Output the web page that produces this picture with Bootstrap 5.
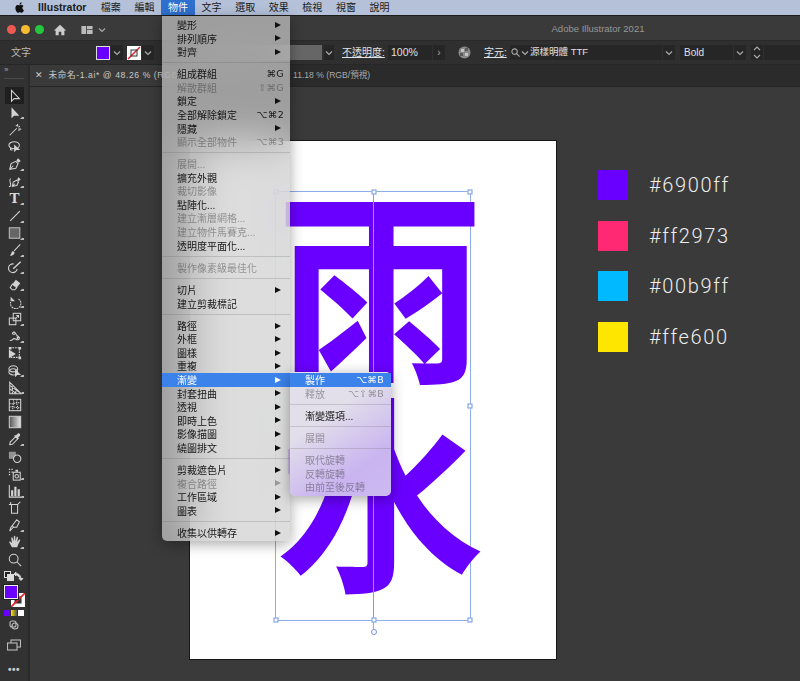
<!DOCTYPE html>
<html lang="zh-TW">
<head>
<meta charset="UTF-8">
<title>Adobe Illustrator 2021</title>
<link href="https://cdn.jsdelivr.net/npm/bootstrap@5.3.0/dist/css/bootstrap.min.css" rel="stylesheet">
<style>
    html, body { height: 100%; }
    body { background: #3a3a3a; overflow: hidden; font-family: "Liberation Sans", "Noto Sans CJK TC", sans-serif; font-size: 10px; }
    .app-root { width: 800px; height: 681px; }

    /* mac menu bar */
    .mac-bar { height: 16px; background: #b4c1d9; color: #1a1a1a; border-bottom: 1px solid #1c1c1c; }
    .apple-logo { width: 12px; height: 13px; margin-left: 14px; fill: #111; }
    .app-name { font-weight: 700; font-size: 10.5px; width: 56px; margin-left: 12px; }
    .mac-item { width: 33.6px; text-align: center; line-height: 15px; }
    .mac-item.is-open { background: #2f6fce; color: #fff; }

    /* title bar */
    .title-bar { height: 24px; background: #3a3a3a; padding: 3px 0 0 6.5px; }
    .light { width: 9px; height: 9px; border-radius: 50%; }
    .light-red { background: #ee5a52; }
    .light-yellow { background: #f5bd2f; margin-left: 5px; }
    .light-green { background: #27c63f; margin-left: 5px; }
    .home-ico { width: 14px; height: 14px; margin-left: 9px; fill: #ccc; }
    .layout-ico { width: 12px; height: 8px; margin-left: 14px; fill: #bbb; }
    .tiny-caret { width: 8px; height: 6px; fill: none; stroke: #aaa; stroke-width: 1.2; }
    .layout-caret { margin-left: 5px; }
    .title-name { position: absolute; left: 398px; top: 22px; width: 400px; text-align: center; color: #979797; font-size: 9.5px; }

    /* control bar */
    .ctl-bar { height: 25px; background: #2f2f2f; border-top: 1px solid #292929; border-bottom: 1px solid #262626; color: #cfcfcf; }
    .ctl-kind { margin-left: 11px; width: 85px; color: #b9b9b9; }
    .ctl-fill { width: 14px; height: 14px; background: #6900ff; border: 1px solid #ddd; }
    .ctl-none { width: 14px; height: 14px; background: #fff; margin-left: 4px; }
    .ctl-none svg { display: block; }
    .ctl-box { background: #262626; height: 15px; display: flex; align-items: center; justify-content: center; }
    .box-caret { width: 12px; margin-left: 1px; }
    .ctl-style { width: 123px; height: 15px; background: #666; margin-left: 45px; }
    .box-style { margin-left: 2px; width: 10px; }
    .ctl-tip { text-decoration: underline; color: #e3e3e3; white-space: nowrap; }
    .tip-opacity { margin-left: 8px; width: 46px; font-size: 10px; }
    .box-opacity { width: 44px; justify-content: flex-start; padding-left: 3px; color: #e0e0e0; font-size: 10.5px; }
    .box-next { width: 12px; margin-left: 1px; color: #aaa; }
    .globe-ico { width: 13px; height: 13px; margin-left: 13px; }
    .tip-char { margin-left: 13px; width: 26px; }
    .box-font { width: 152px; justify-content: flex-start; padding-left: 1px; color: #e0e0e0; font-size: 9.5px; gap: 1px; }
    .search-ico { width: 9px; height: 9px; fill: none; stroke: #aaa; stroke-width: 1.2; }
    .font-caret { margin-right: 0; }
    .box-caret2 { width: 12px; margin-left: 1px; }
    .box-weight { width: 53px; margin-left: 5px; justify-content: flex-start; padding-left: 4px; color: #e0e0e0; font-size: 10px; }
    .box-step { width: 12px; margin-left: 5px; }
    .box-rest { flex-grow: 1; margin-left: 1px; }

    /* tools */
    .tool-rail { width: 30px; background: #323232; border-right: 2px solid #2a2a2a; flex: none; }
    .rail-head { height: 22px; color: #aaa; font-size: 8px; line-height: 10px; padding-left: 4px; }
    .rail-grip { width: 20px; height: 1px; background: #4a4a4a; margin-top: 3px; }
    .tool-cell { height: 17.2px; margin: 0 4px 0 5px; display: flex; align-items: center; justify-content: center; position: relative; }
    .tool-cell.is-active { background: #1f1f1f; }
    .tool-cell svg { width: 14px; height: 14px; fill: none; stroke: #d2d2d2; stroke-width: 1.2; }
    .has-fly::after { content: ""; position: absolute; right: 0; bottom: 2px; border-left: 2px solid transparent; border-bottom: 2px solid #bbb; border-top: 0; border-right: 2px solid #bbb; }
    .type-t { font: 700 15px/1 "Liberation Serif", serif; color: #ddd; }
    .solid { fill: #d2d2d2; stroke: none; }
    .swap-row { height: 16px; margin: 0 4px; }
    .swap-row svg { width: 10px; height: 10px; fill: #ddd; stroke: #ddd; }
    .color-stack { height: 24px; margin: 1px 0 0 4px; position: relative; }
    .stack-fill { position: absolute; left: 0; top: 0; width: 14px; height: 14px; background: #6900ff; border: 1px solid #eee; box-shadow: 0 0 0 1px #222; z-index: 1; }
    .stack-stroke { position: absolute; left: 7px; top: 8px; width: 14px; height: 14px; background: #fff; display: block; }
    .mode-row { margin: 1px 0 0 4px; gap: 1px; }
    .mode-chip { width: 6px; height: 6px; }
    .chip-purple { background: #6900ff; }
    .chip-yellow { background: linear-gradient(90deg, #ffe600, #555); }
    .chip-none { background: #fff; }
    .rail-ico { height: 15px; margin-top: 4px; }
    .rail-ico svg { fill: none; stroke: #bbb; stroke-width: 1.1; }
    .ico-draw { width: 10px; height: 10px; }
    .ico-screen { width: 14px; height: 12px; }
    .rail-more { color: #ccc; font-size: 10px; font-weight: 700; letter-spacing: .5px; text-align: center; margin-top: 8px; width: 28px; }

    /* documents */
    .tab-row { height: 22px; background: #2b2b2b; color: #c8c8c8; border-bottom: 1px solid #262626; white-space: nowrap; }
    .doc-tab { width: 258px; background: #3a3a3a; height: 100%; padding-left: 5px; gap: 5px; font-size: 8.6px; letter-spacing: .6px; }
    .doc-close { color: #ccc; font-size: 9px; }
    .doc-other { padding-left: 5px; color: #a9a9a9; font-size: 8.6px; }
    .stage { background: #3a3a3a; overflow: hidden; }
    .art-board { position: absolute; left: 159px; top: 53px; width: 368px; height: 520px; background: #fff; border: 1px solid #161616; }
    .sel-frame { position: absolute; left: 85px; top: 50px; width: 196px; height: 430px; border: 1px solid #8eaee8; }
    .sel-axis { position: absolute; left: 97px; top: 0; width: 1px; height: 100%; background: #7d9de6; }
    .sel-stem { position: absolute; left: 97px; top: 100%; width: 1px; height: 9px; background: #8eaee8; }
    .sel-handle { position: absolute; width: 5px; height: 5px; background: #fff; border: 1px solid #6f93e0; transform: translate(-50%, -50%); }
    .h-left { left: 0; } .h-mid { left: 98px; } .h-right { left: 100%; }
    .h-top { top: 0; } .h-center { top: 50%; } .h-bottom { top: 100%; }
    .sel-rotate { position: absolute; left: 98px; top: calc(100% + 12px); width: 6px; height: 6px; border: 1px solid #6f93e0; border-radius: 50%; background: #fff; transform: translate(-50%, -50%); }
    .big-word { font-family: "Noto Sans CJK TC", sans-serif; font-weight: 700; font-size: 208px; line-height: 208px; color: #6900ff; text-align: center; margin-top: -19px; }
    .color-list { position: absolute; left: 568px; top: 83px; gap: 20.7px; }
    .color-chip { width: 30px; height: 30px; }
    .chip-6900ff { background: #6900ff; }
    .chip-ff2973 { background: #ff2973; }
    .chip-00b9ff { background: #00b9ff; }
    .chip-ffe600 { background: #ffe600; }
    .color-code { margin-left: 21px; color: #eee; font-family: Roboto, "Liberation Sans", sans-serif; font-weight: 300; font-size: 20px; letter-spacing: 1.65px; line-height: 30px; }

    /* open menus */
    .mac-menu { --bs-dropdown-link-color: #151515; --bs-dropdown-link-disabled-color: rgba(40,40,40,.42); --bs-dropdown-link-hover-bg: transparent; --bs-dropdown-link-active-bg: #3b82ea; --bs-dropdown-link-active-color: #fff; }
    .dropdown-menu.mac-menu { min-width: 0; padding: 2px 0; margin: 0; font-size: 10px; background: rgba(205,205,205,.68); -webkit-backdrop-filter: blur(22px); backdrop-filter: blur(22px); border: 0; border-radius: 0 0 5px 5px; box-shadow: 0 3px 14px rgba(0,0,0,.35); }
    .menu-main { left: 162px; top: 16px; width: 128px; }
    .dropdown-menu.mac-menu.menu-sub { left: 290px; top: 372px; width: 101px; padding: 1px 0 2px; border-radius: 0 5px 5px 5px; -webkit-backdrop-filter: none; backdrop-filter: none; background: linear-gradient(145deg, #e2dfea 35%, #c9b4f0 75%, #cdb9f1); }
    .mac-menu .dropdown-item { height: 13.55px; line-height: 13.55px; padding: 0 7px 0 15px; display: flex; justify-content: space-between; align-items: center; font-family: "Noto Sans CJK TC", "DejaVu Sans", sans-serif; }
    .menu-main .dropdown-item { padding: 0 6px 0 15px; }
    .mac-menu .dropdown-item.disabled { background: transparent; }
    .mac-menu .dropdown-divider { margin: 3.85px 0; height: 0; border-top: 1px solid rgba(90,90,90,.22); opacity: 1; }
    .key-hint { font-family: "DejaVu Sans", sans-serif; font-size: 9.5px; letter-spacing: .3px; white-space: nowrap; }
    .sub-arrow { width: 0; height: 0; border-left: 6px solid #111; border-top: 3.5px solid transparent; border-bottom: 3.5px solid transparent; margin-right: 3px; }
    .disabled .sub-arrow { border-left-color: #999; }
    .active .sub-arrow { border-left-color: #fff; }
</style>
</head>
<body>
<div class="app-root d-flex flex-column position-relative">

    <div class="mac-bar d-flex align-items-center flex-shrink-0">
        <svg class="apple-logo" viewBox="0 0 16 16"><path d="M11.2 8.5c0-1.7 1.4-2.5 1.5-2.6-.8-1.2-2.1-1.4-2.5-1.4-1.1-.1-2.1.6-2.6.6-.6 0-1.4-.6-2.3-.6-1.2 0-2.3.7-2.9 1.7-1.2 2.2-.3 5.4.9 7.1.6.9 1.3 1.8 2.2 1.8.9 0 1.2-.6 2.3-.6s1.4.6 2.3.6c1 0 1.6-.9 2.2-1.7.7-1 1-2 1-2-.1 0-2-.8-2.1-2.9zM9.4 3.2c.5-.6.8-1.4.7-2.2-.7 0-1.5.5-2 1.1-.4.5-.8 1.3-.7 2.1.8 0 1.5-.4 2-1z"/></svg>
        <span class="app-name">Illustrator</span>
        <span class="mac-item">檔案</span>
        <span class="mac-item">編輯</span>
        <span class="mac-item is-open">物件</span>
        <span class="mac-item">文字</span>
        <span class="mac-item">選取</span>
        <span class="mac-item">效果</span>
        <span class="mac-item">檢視</span>
        <span class="mac-item">視窗</span>
        <span class="mac-item">說明</span>
    </div>

    <div class="title-bar d-flex align-items-center flex-shrink-0">
        <span class="light light-red"></span>
        <span class="light light-yellow"></span>
        <span class="light light-green"></span>
        <svg class="home-ico" viewBox="0 0 16 16"><path d="M8 2 1 8.5h2V14h3.5v-4h3v4H13V8.5h2z"/></svg>
        <svg class="layout-ico" viewBox="0 0 14 10"><path d="M0 0h6v10H0zM7 0h7v4H7zM7 5h7v5H7z"/></svg>
        <svg class="tiny-caret layout-caret" viewBox="0 0 8 6"><path d="M1 1.5 4 4.5 7 1.5"/></svg>
        <span class="title-name">Adobe Illustrator 2021</span>
    </div>

    <div class="ctl-bar d-flex align-items-center flex-shrink-0">
        <span class="ctl-kind">文字</span>
        <span class="ctl-fill"></span>
        <span class="ctl-box box-caret"><svg class="tiny-caret" viewBox="0 0 8 6"><path d="M1 1.5 4 4.5 7 1.5"/></svg></span>
        <span class="ctl-none"><svg width="14" height="14" viewBox="0 0 14 14"><path d="M1 13 13 1" stroke="#e8212b" stroke-width="1.4"/><rect x="4" y="4" width="6" height="6" fill="none" stroke="#333"/></svg></span>
        <span class="ctl-box box-caret"><svg class="tiny-caret" viewBox="0 0 8 6"><path d="M1 1.5 4 4.5 7 1.5"/></svg></span>
        <span class="ctl-style"></span>
        <span class="ctl-box box-style"><svg class="tiny-caret" viewBox="0 0 8 6"><path d="M1 1.5 4 4.5 7 1.5"/></svg></span>
        <span class="ctl-tip tip-opacity">不透明度:</span>
        <span class="ctl-box box-opacity">100%</span>
        <span class="ctl-box box-next">›</span>
        <svg class="globe-ico" viewBox="0 0 13 13"><circle cx="6.5" cy="6.5" r="6" fill="#8a8a8a"/><path d="M3 3h3v3H3zM7 7h3v3H7z" fill="#c4c4c4"/><path d="M7 2h3v3H7zM2 7h3v3H2z" fill="#5a5a5a"/></svg>
        <span class="ctl-tip tip-char">字元:</span>
        <span class="ctl-box box-font">
            <svg class="search-ico" viewBox="0 0 10 10"><circle cx="4" cy="4" r="3"/><path d="M6.2 6.2 9.5 9.5"/></svg>
            <svg class="tiny-caret font-caret" viewBox="0 0 8 6"><path d="M1 1.5 4 4.5 7 1.5"/></svg>
            <span>源樣明體 TTF</span>
        </span>
        <span class="ctl-box box-caret2"><svg class="tiny-caret" viewBox="0 0 8 6"><path d="M1 1.5 4 4.5 7 1.5"/></svg></span>
        <span class="ctl-box box-weight">Bold</span>
        <span class="ctl-box box-caret2"><svg class="tiny-caret" viewBox="0 0 8 6"><path d="M1 1.5 4 4.5 7 1.5"/></svg></span>
        <span class="ctl-box box-step"><svg width="8" height="13" viewBox="0 0 8 13" fill="none" stroke="#aaa" stroke-width="1.1"><path d="M1 4 4 1 7 4M1 9 4 12 7 9"/></svg></span>
        <span class="ctl-box box-rest"></span>
    </div>

    <div class="d-flex flex-grow-1">
        <div class="tool-rail">
            <div class="rail-head">»<div class="rail-grip"></div></div>
            <div class="tool-cell is-active"><svg viewBox="0 0 16 16"><path d="M4 1.5V14l3-3h6z"/></svg></div>
            <div class="tool-cell has-fly"><svg viewBox="0 0 16 16"><path class="solid" d="M4 1.5V14l3-3h6z"/></svg></div>
            <div class="tool-cell"><svg viewBox="0 0 16 16"><path d="M2 14 10 6M11 1v3M13.5 3.5l-1.5 1.5M15 7h-3M9 2.5l1 1M13 9l-1-1"/></svg></div>
            <div class="tool-cell"><svg viewBox="0 0 16 16"><ellipse cx="7" cy="6" rx="6" ry="4"/><path d="M3 9c-1 2 1 3 2 2"/><path class="solid" d="M7 5v9l2.500-2.500H14z"/></svg></div>
            <div class="tool-cell has-fly"><svg viewBox="0 0 16 16"><path d="M2 14l1.500-6.500L9 5l2.500 2.500L9 13zM2 14l4-4"/><path class="solid" d="M9.500 4l2-2.500 3 3L12 6.500z"/></svg></div>
            <div class="tool-cell has-fly"><svg viewBox="0 0 16 16"><path d="M5 13l1-5 4-2 2 2-2 4zM5 13l3-3M3 4C0 7 4 9 3 12c-.5 1.500-2 1.500-2 1.500"/><path class="solid" d="M10.500 5l1.500-2.500 2.500 2.500L12 7z"/></svg></div>
            <div class="tool-cell has-fly"><span class="type-t">T</span></div>
            <div class="tool-cell has-fly"><svg viewBox="0 0 16 16"><path d="M2.500 13.500 13.500 2.500"/></svg></div>
            <div class="tool-cell has-fly"><svg viewBox="0 0 16 16"><rect x="1.500" y="2" width="12" height="12" fill="#666" stroke="#bbb"/></svg></div>
            <div class="tool-cell has-fly"><svg viewBox="0 0 16 16"><path d="M7 9 14 1.500"/><path class="solid" d="M2 14.500c2 .3 5-.5 5.500-3 .2-1-.8-2.500-2.300-2C3.500 10 4.500 13 2 14.500z"/></svg></div>
            <div class="tool-cell has-fly"><svg viewBox="0 0 16 16"><path d="M10.500 10.200A5 5 0 1 1 6.500 4.500"/><path d="M6 10 14.500 2" stroke-width="1.700"/></svg></div>
            <div class="tool-cell has-fly"><svg viewBox="0 0 16 16"><path class="solid" d="M9 2l5 4-4 5-5-4z"/><path d="M5 7l5 4-2 2.500H5L2.500 11z"/></svg></div>
            <div class="tool-cell has-fly"><svg viewBox="0 0 16 16" stroke-dasharray="2.200 .8"><path d="M12 4.500A6 6 0 1 1 3 8"/><path class="solid" d="M3 2v5h5z"/></svg></div>
            <div class="tool-cell has-fly"><svg viewBox="0 0 16 16"><rect x="1.500" y="7" width="7.500" height="7.500"/><rect x="6" y="1.500" width="8.500" height="8.500"/><path d="M8 8l4-4M9.500 4H12v2.500"/></svg></div>
            <div class="tool-cell has-fly"><svg viewBox="0 0 16 16"><path d="M2 13c3 1 3-2 5-2s3 2 5 1 1-3-1-4-2-3-3-4-3 0-3 1 2 1 3 1"/><path class="solid" d="M6 3l2 .5L7 6zM10 8l3 2-3 2z"/></svg></div>
            <div class="tool-cell"><svg viewBox="0 0 16 16"><path d="M2 2h11v11H2" stroke-dasharray="2 1"/><path class="solid" d="M1 4l8 5-8 5zM12 1h3v3h-3zM12 12h3v3h-3zM1 1h3v3H1z"/></svg></div>
            <div class="tool-cell has-fly"><svg viewBox="0 0 16 16"><ellipse cx="6" cy="5.500" rx="5" ry="3.500"/><ellipse cx="6" cy="9" rx="5" ry="3.500"/><path class="solid" d="M8 6v9l2.500-2.500H15z"/></svg></div>
            <div class="tool-cell has-fly"><svg viewBox="0 0 16 16"><path d="M2 1.500v13h13zM2 5l11 8M2 9l7 5M5 6v8M9 9.500V14"/></svg></div>
            <div class="tool-cell"><svg viewBox="0 0 16 16" stroke-width="1"><rect x="1.500" y="1.500" width="13" height="13"/><path d="M1.500 6c4 2 9-2 13 0M1.500 10.500c4-2 9 2 13 0M6 1.500c2 4-2 9 0 13M10.500 1.500c-2 4 2 9 0 13" stroke-dasharray="1.500 1"/></svg></div>
            <div class="tool-cell"><svg viewBox="0 0 16 16"><defs><linearGradient id="gradTool"><stop offset="0" stop-color="#555"/><stop offset="1" stop-color="#e8e8e8"/></linearGradient></defs><rect x="1.500" y="1.500" width="13" height="13" fill="url(#gradTool)" stroke="#ccc"/></svg></div>
            <div class="tool-cell has-fly"><svg viewBox="0 0 16 16"><path d="M2 14.500l.5-3L9 5l2.500 2.500L5 14zM2 14.500l1-1"/><path class="solid" d="M9 4l2-2c1.500-1.500 4 1 2.500 2.500l-2 2 .5 1-1 1-4-4 1-1z"/></svg></div>
            <div class="tool-cell"><svg viewBox="0 0 16 16"><path class="solid" d="M1 2h8v8H1z" fill-opacity=".6"/><circle cx="10.500" cy="10" r="4.200" fill="#323232"/></svg></div>
            <div class="tool-cell has-fly"><svg viewBox="0 0 16 16"><rect x="6" y="6" width="8" height="9"/><circle cx="10" cy="10.500" r="2"/><path class="solid" d="M8.500 3h3v2.500h-3zM1 2h1.500v1.500H1zM4 2h1.500v1.500H4zM1 5h1.500v1.500H1zM4 5h1.500v1.500H4zM1 8h1.500v1.500H1z"/></svg></div>
            <div class="tool-cell has-fly"><svg viewBox="0 0 16 16"><path d="M1.500 1v14h14"/><path class="solid" d="M3.500 7H6v7H3.500zM7.200 3h2.500v11H7.200zM11 6h2.500v8H11z"/></svg></div>
            <div class="tool-cell"><svg viewBox="0 0 16 16"><path d="M3 1v3M1 4h10v10H4V4M11 4l3-3"/></svg></div>
            <div class="tool-cell has-fly"><svg viewBox="0 0 16 16"><path d="M2 15l1-4L10 2l3 2.500-3 6H6zM5 9l2 2"/></svg></div>
            <div class="tool-cell has-fly"><svg viewBox="0 0 16 16"><path class="solid" d="M4.500 14 1.500 8.500c-.5-1 .8-1.600 1.500-.8l1.500 1.800L3.700 3.500c-.1-1.100 1.400-1.300 1.700-.2L6.500 7l.2-5.300c0-1.100 1.600-1.100 1.600 0L8.500 7l1.300-4.500c.3-1 1.800-.6 1.600.4L10.500 8l2-2.500c.7-.8 1.900 0 1.300 1L11.500 11 10.500 14z"/></svg></div>
            <div class="tool-cell"><svg viewBox="0 0 16 16" stroke-width="1.400"><circle cx="6.500" cy="6.500" r="5"/><path d="M10 10l5 5"/></svg></div>
            <div class="d-flex justify-content-between align-items-center swap-row">
                <svg viewBox="0 0 10 10"><rect x="0.500" y="0.500" width="6" height="6" fill="#222"/><rect x="3.500" y="3.500" width="6" height="6"/></svg>
                <svg viewBox="0 0 10 10" fill="none"><path d="M1 3c3-1 6 1 6 5M0 3l2-2v4zM7 9.500l-2-2h4z" stroke-width=".8"/></svg>
            </div>
            <div class="color-stack">
                <span class="stack-fill"></span>
                <svg class="stack-stroke" viewBox="0 0 14 14"><rect x="3.500" y="3.500" width="7" height="7" fill="#323232"/><path d="M0 14 14 0" stroke="#e8212b" stroke-width="1.600"/></svg>
            </div>
            <div class="d-flex mode-row">
                <span class="mode-chip chip-purple"></span>
                <span class="mode-chip chip-yellow"></span>
                <span class="mode-chip chip-none"></span>
            </div>
            <div class="rail-ico d-flex justify-content-center"><svg class="ico-draw" viewBox="0 0 10 10"><rect x="1" y="1" width="6" height="6" rx="2"/><circle cx="6" cy="6" r="3"/></svg></div>
            <div class="rail-ico d-flex justify-content-center"><svg class="ico-screen" viewBox="0 0 14 12"><rect x="4" y="1" width="9.500" height="7"/><rect x="0.500" y="4" width="9.500" height="7" fill="#323232"/></svg></div>
            <div class="rail-more">•••</div>
        </div>

        <div class="d-flex flex-column flex-grow-1">
            <div class="tab-row d-flex align-items-center flex-shrink-0">
                <div class="doc-tab d-flex align-items-center"><span class="doc-close">✕</span><span>未命名-1.ai* @ 48.26 % (RGB/預視)</span></div>
                <div class="doc-other">11.18 % (RGB/預視)</div>
            </div>
            <div class="stage flex-grow-1 position-relative">
                <div class="art-board">
                    <div class="sel-frame">
                        <div class="big-word">雨<br>水</div>
                        <span class="sel-axis"></span>
                        <span class="sel-stem"></span>
                        <span class="sel-handle h-left h-top"></span>
                        <span class="sel-handle h-mid h-top"></span>
                        <span class="sel-handle h-right h-top"></span>
                        <span class="sel-handle h-left h-center"></span>
                        <span class="sel-handle h-right h-center"></span>
                        <span class="sel-handle h-left h-bottom"></span>
                        <span class="sel-handle h-mid h-bottom"></span>
                        <span class="sel-handle h-right h-bottom"></span>
                        <span class="sel-rotate"></span>
                    </div>
                </div>
                <div class="color-list d-flex flex-column">
                    <div class="d-flex align-items-center"><span class="color-chip chip-6900ff"></span><span class="color-code">#6900ff</span></div>
                    <div class="d-flex align-items-center"><span class="color-chip chip-ff2973"></span><span class="color-code">#ff2973</span></div>
                    <div class="d-flex align-items-center"><span class="color-chip chip-00b9ff"></span><span class="color-code">#00b9ff</span></div>
                    <div class="d-flex align-items-center"><span class="color-chip chip-ffe600"></span><span class="color-code">#ffe600</span></div>
                </div>
            </div>
        </div>
    </div>

    <ul class="dropdown-menu show mac-menu menu-main list-unstyled">
        <li><a class="dropdown-item" href="#">變形<span class="sub-arrow"></span></a></li>
        <li><a class="dropdown-item" href="#">排列順序<span class="sub-arrow"></span></a></li>
        <li><a class="dropdown-item" href="#">對齊<span class="sub-arrow"></span></a></li>
        <li><hr class="dropdown-divider"></li>
        <li><a class="dropdown-item" href="#">組成群組<span class="key-hint">⌘G</span></a></li>
        <li><a class="dropdown-item disabled" href="#">解散群組<span class="key-hint">⇧⌘G</span></a></li>
        <li><a class="dropdown-item" href="#">鎖定<span class="sub-arrow"></span></a></li>
        <li><a class="dropdown-item" href="#">全部解除鎖定<span class="key-hint">⌥⌘2</span></a></li>
        <li><a class="dropdown-item" href="#">隱藏<span class="sub-arrow"></span></a></li>
        <li><a class="dropdown-item disabled" href="#">顯示全部物件<span class="key-hint">⌥⌘3</span></a></li>
        <li><hr class="dropdown-divider"></li>
        <li><a class="dropdown-item disabled" href="#">展開...</a></li>
        <li><a class="dropdown-item" href="#">擴充外觀</a></li>
        <li><a class="dropdown-item disabled" href="#">裁切影像</a></li>
        <li><a class="dropdown-item" href="#">點陣化...</a></li>
        <li><a class="dropdown-item disabled" href="#">建立漸層網格...</a></li>
        <li><a class="dropdown-item disabled" href="#">建立物件馬賽克...</a></li>
        <li><a class="dropdown-item" href="#">透明度平面化...</a></li>
        <li><hr class="dropdown-divider"></li>
        <li><a class="dropdown-item disabled" href="#">製作像素級最佳化</a></li>
        <li><hr class="dropdown-divider"></li>
        <li><a class="dropdown-item" href="#">切片<span class="sub-arrow"></span></a></li>
        <li><a class="dropdown-item" href="#">建立剪裁標記</a></li>
        <li><hr class="dropdown-divider"></li>
        <li><a class="dropdown-item" href="#">路徑<span class="sub-arrow"></span></a></li>
        <li><a class="dropdown-item" href="#">外框<span class="sub-arrow"></span></a></li>
        <li><a class="dropdown-item" href="#">圖樣<span class="sub-arrow"></span></a></li>
        <li><a class="dropdown-item" href="#">重複<span class="sub-arrow"></span></a></li>
        <li><a class="dropdown-item active" href="#">漸變<span class="sub-arrow"></span></a></li>
        <li><a class="dropdown-item" href="#">封套扭曲<span class="sub-arrow"></span></a></li>
        <li><a class="dropdown-item" href="#">透視<span class="sub-arrow"></span></a></li>
        <li><a class="dropdown-item" href="#">即時上色<span class="sub-arrow"></span></a></li>
        <li><a class="dropdown-item" href="#">影像描圖<span class="sub-arrow"></span></a></li>
        <li><a class="dropdown-item" href="#">繞圖排文<span class="sub-arrow"></span></a></li>
        <li><hr class="dropdown-divider"></li>
        <li><a class="dropdown-item" href="#">剪裁遮色片<span class="sub-arrow"></span></a></li>
        <li><a class="dropdown-item disabled" href="#">複合路徑<span class="sub-arrow"></span></a></li>
        <li><a class="dropdown-item" href="#">工作區域<span class="sub-arrow"></span></a></li>
        <li><a class="dropdown-item" href="#">圖表<span class="sub-arrow"></span></a></li>
        <li><hr class="dropdown-divider"></li>
        <li><a class="dropdown-item" href="#">收集以供轉存<span class="sub-arrow"></span></a></li>
    </ul>

    <ul class="dropdown-menu show mac-menu menu-sub list-unstyled">
        <li><a class="dropdown-item active" href="#">製作<span class="key-hint">⌥⌘B</span></a></li>
        <li><a class="dropdown-item disabled" href="#">釋放<span class="key-hint">⌥⇧⌘B</span></a></li>
        <li><hr class="dropdown-divider"></li>
        <li><a class="dropdown-item" href="#">漸變選項...</a></li>
        <li><hr class="dropdown-divider"></li>
        <li><a class="dropdown-item disabled" href="#">展開</a></li>
        <li><hr class="dropdown-divider"></li>
        <li><a class="dropdown-item disabled" href="#">取代旋轉</a></li>
        <li><a class="dropdown-item disabled" href="#">反轉旋轉</a></li>
        <li><a class="dropdown-item disabled" href="#">由前至後反轉</a></li>
    </ul>
</div>
<script src="https://cdn.jsdelivr.net/npm/bootstrap@5.3.0/dist/js/bootstrap.bundle.min.js"></script>
</body>
</html>
